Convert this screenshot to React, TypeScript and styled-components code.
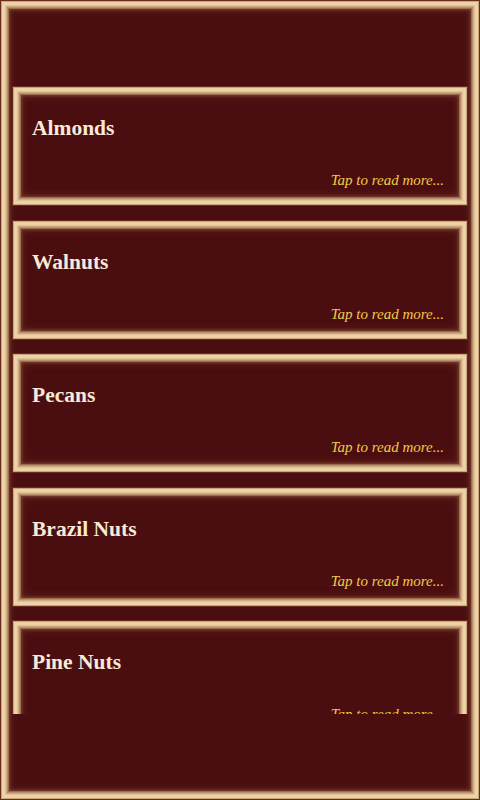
import { type FC } from 'react'
import styled, { createGlobalStyle, css } from 'styled-components'

const maroon = '#4b0e10'

const GlobalStyle = createGlobalStyle`
  html,
  body {
    margin: 0;
    padding: 0;
    background: ${maroon};
  }

  * {
    box-sizing: border-box;
  }
`

// stepped inset shadows give the carved wooden frame look
const bevel = css`
  box-shadow:
    inset 0 0 0 1px #6a2a1e,
    inset 0 0 0 2px #c9a37a,
    inset 0 0 0 5px #ecd2a8,
    inset 0 0 0 6px #e0c096,
    inset 0 0 0 7px #cfab80,
    inset 0 0 0 8px #b98f68,
    inset 0 0 0 9px #9c6e50,
    inset 0 0 3px 10px #7a4232,
    inset 0 0 6px 12px #5a1c18;
`

const Screen = styled.div`
  background: ${maroon};
  display: flex;
  flex-direction: column;
  height: 800px;
  padding: 10px;
  width: 480px;

  ${bevel}
`

const Header = styled.div`
  flex: 0 0 74px;
`

const List = styled.div`
  display: flex;
  flex: 0 0 630px;
  flex-direction: column;
  gap: 13.5px;
  overflow: hidden;
  padding: 2px 2px 0;
`

const Card = styled.div`
  background: ${maroon};
  display: flex;
  flex: 0 0 120px;
  flex-direction: column;
  justify-content: space-between;
  padding: 31px 24px 19px 20px;

  ${bevel}
`

const Title = styled.h2`
  color: #f7ead6;
  font-family: 'Liberation Serif', 'Times New Roman', serif;
  font-size: 21.5px;
  font-weight: 700;
  line-height: 22px;
  margin: 0;
`

const More = styled.span`
  align-self: flex-end;
  color: #f2ca46;
  font-family: 'Liberation Serif', 'Times New Roman', serif;
  font-size: 15px;
  font-style: italic;
  line-height: 14px;
`

const nuts = ['Almonds', 'Walnuts', 'Pecans', 'Brazil Nuts', 'Pine Nuts']

const NutCard: FC<{ name: string }> = ({ name }) => (
  <Card>
    <Title>{name}</Title>
    <More>Tap to read more...</More>
  </Card>
)

const App: FC = () => (
  <>
    <GlobalStyle />
    <Screen>
      <Header />
      <List>
        {nuts.map((name) => (
          <NutCard key={name} name={name} />
        ))}
      </List>
    </Screen>
  </>
)

export default App
